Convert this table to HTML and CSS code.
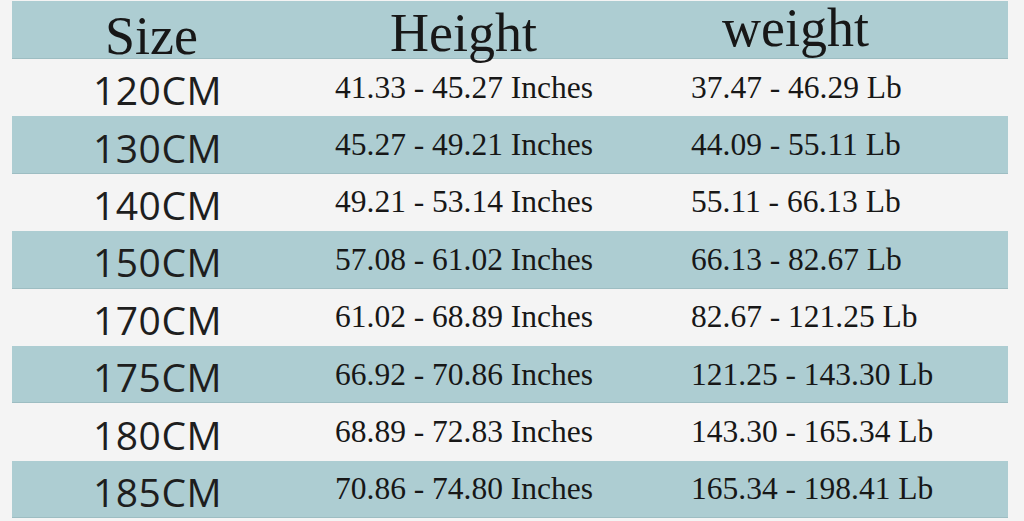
FILE: index.html
```html
<!DOCTYPE html>
<html lang="en">
<head>
    <meta charset="UTF-8">
    <meta name="viewport" content="width=device-width, initial-scale=1.0">
    <title>Size Chart</title>
    <link rel="stylesheet" href="styles.css">
</head>
<body>
    <div class="chart">
        <div class="row head">
            <div class="cell h-size">Size</div>
            <div class="cell h-height">Height</div>
            <div class="cell h-weight">weight</div>
        </div>
        <div class="row">
            <div class="cell size">120CM</div>
            <div class="cell">41.33 - 45.27 Inches</div>
            <div class="cell">37.47 - 46.29 Lb</div>
        </div>
        <div class="row shade">
            <div class="cell size">130CM</div>
            <div class="cell">45.27 - 49.21 Inches</div>
            <div class="cell">44.09 - 55.11 Lb</div>
        </div>
        <div class="row">
            <div class="cell size">140CM</div>
            <div class="cell">49.21 - 53.14 Inches</div>
            <div class="cell">55.11 - 66.13 Lb</div>
        </div>
        <div class="row shade">
            <div class="cell size">150CM</div>
            <div class="cell">57.08 - 61.02 Inches</div>
            <div class="cell">66.13 - 82.67 Lb</div>
        </div>
        <div class="row">
            <div class="cell size">170CM</div>
            <div class="cell">61.02 - 68.89 Inches</div>
            <div class="cell">82.67 - 121.25 Lb</div>
        </div>
        <div class="row shade">
            <div class="cell size">175CM</div>
            <div class="cell">66.92 - 70.86 Inches</div>
            <div class="cell">121.25 - 143.30 Lb</div>
        </div>
        <div class="row">
            <div class="cell size">180CM</div>
            <div class="cell">68.89 - 72.83 Inches</div>
            <div class="cell">143.30 - 165.34 Lb</div>
        </div>
        <div class="row shade">
            <div class="cell size">185CM</div>
            <div class="cell">70.86 - 74.80 Inches</div>
            <div class="cell">165.34 - 198.41 Lb</div>
        </div>
    </div>
</body>
</html>
```

FILE: styles.css
```css
body {
    margin: 0;
    background-color: #F4F4F4;
    color: #171717;
    font-family: "Liberation Serif", "Times New Roman", serif;
}
.chart {
    width: 996px;
    margin: 0 0 0 12px;
    padding-top: 1px;
}
.row {
    display: grid;
    grid-template-columns: 242px 356px 1fr;
    align-items: center;
    height: 57.4px;
    padding-left: 81px;
    font-size: 31.5px;
}
.shade,
.head {
    background-color: #ADCDD2;
    box-shadow: inset 0 -1px 0 #9DBDC2;
}
.head {
    height: 58px;
    font-size: 54px;
    line-height: 1;
}
.cell {
    white-space: nowrap;
}
.h-size {
    padding: 6px 0 0 12px;
}
.h-height {
    padding: 1px 0 0 55px;
}
.h-weight {
    padding: 0 0 9px 31px;
}
.size {
    font-family: "Open Sans", "Noto Sans", sans-serif;
    font-size: 39px;
    letter-spacing: 0.5px;
    color: #1E1E1E;
    padding-top: 4px;
}
```
